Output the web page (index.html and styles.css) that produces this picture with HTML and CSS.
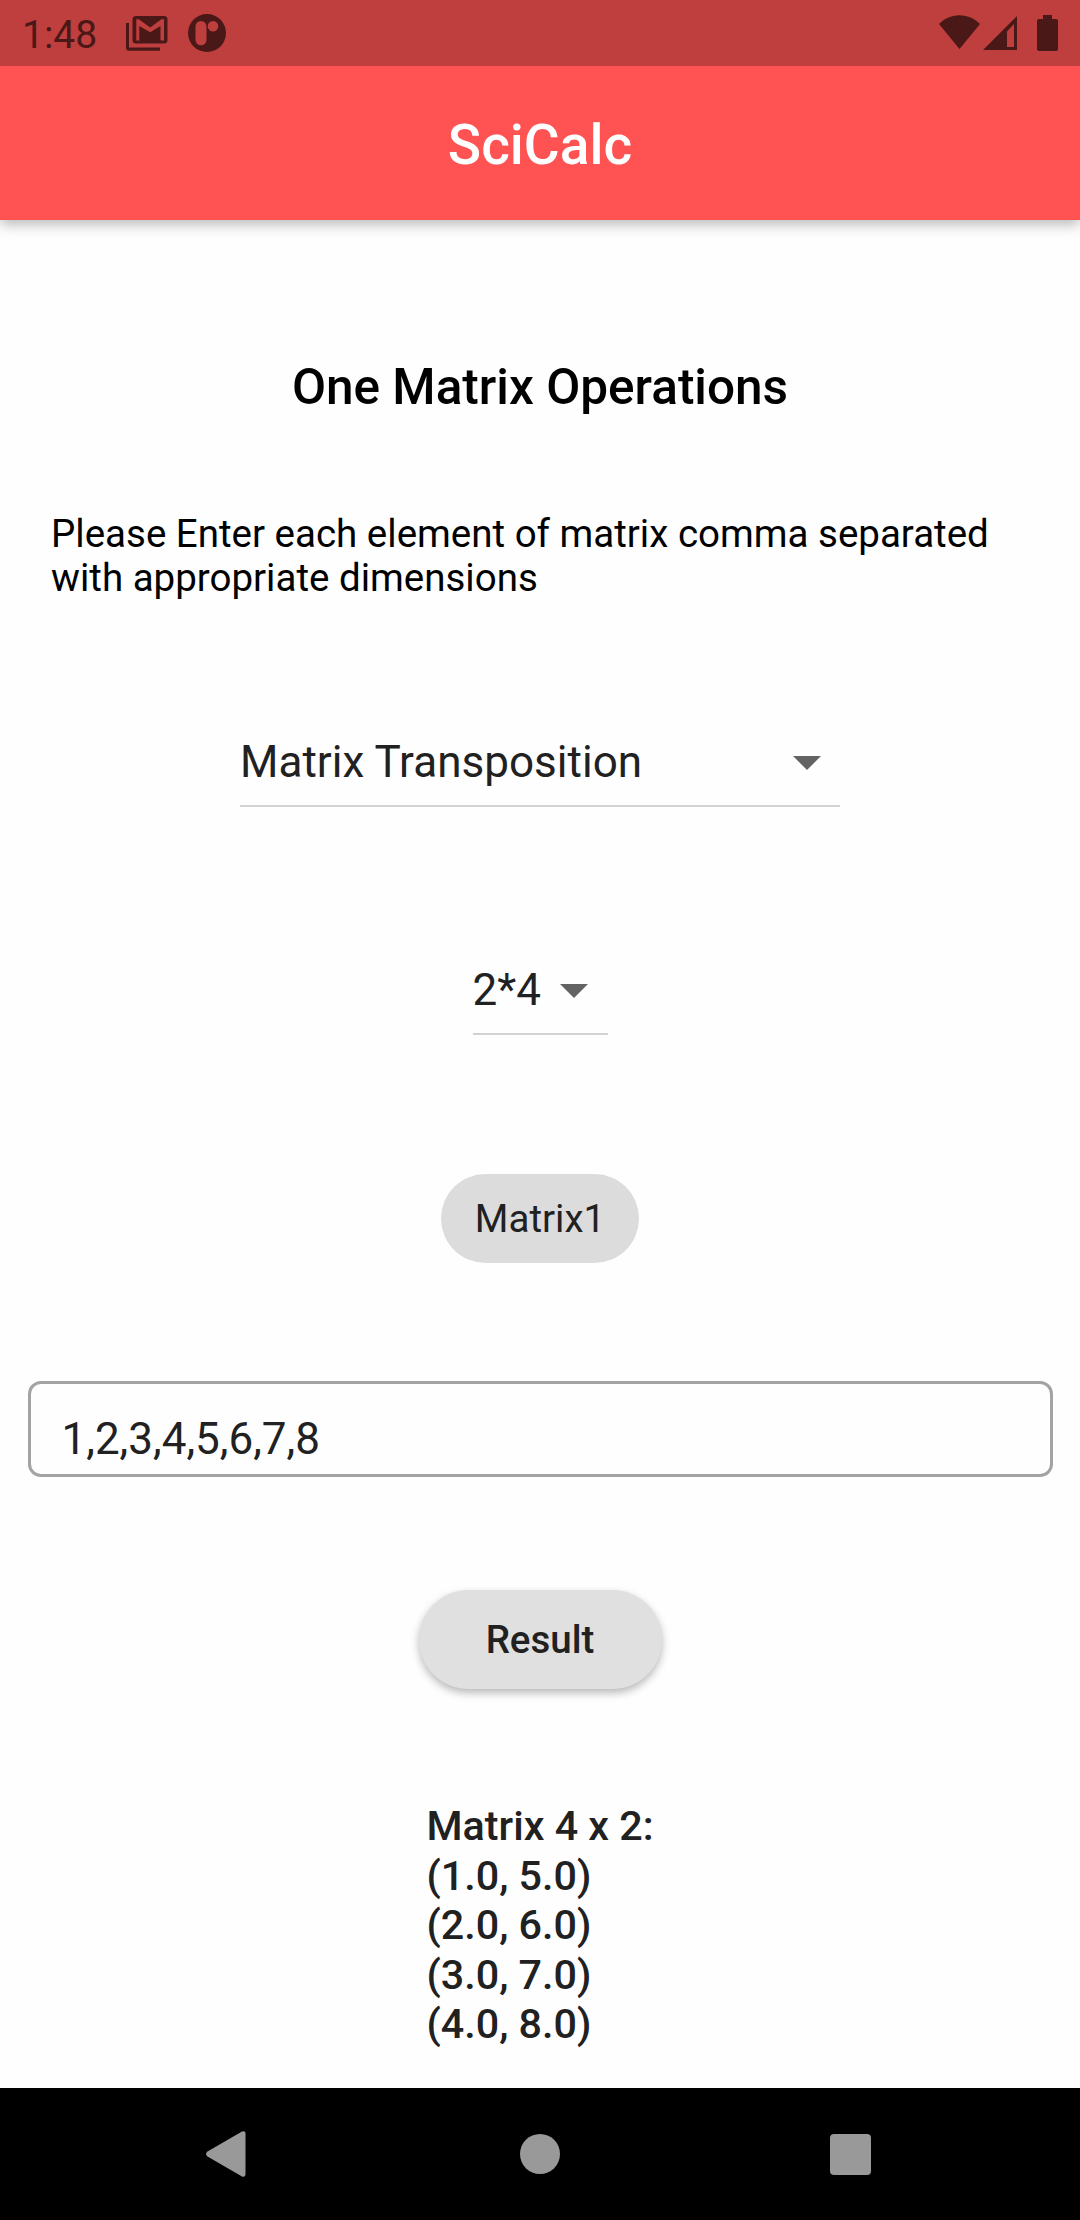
FILE: index.html
```html
<!DOCTYPE html>
<html lang="en">
<head>
<meta charset="utf-8">
<title>SciCalc</title>
<link rel="stylesheet" href="styles.css">
</head>
<body>
<div class="screen">
  <div class="status-bar">
    <span class="clock">1:48</span>
    <svg class="icon-mail" width="42" height="36" viewBox="0 0 42 36">
      <path fill-rule="evenodd" d="M10 0h28a3.500 3.500 0 0 1 3.500 3.500V24a3.500 3.500 0 0 1-3.500 3.500H10a3.500 3.500 0 0 1-3.500-3.500V3.500A3.500 3.500 0 0 1 10 0zM10.300 24.500h3V10l10.900 6.300L34.500 10v14.500h3.500V3.300h-2.600L24.200 11.500 12.800 3.300h-2.500z"/>
      <path d="M0 7h3v24.500h31v3.200H3a3 3 0 0 1-3-3z"/>
    </svg>
    <svg class="icon-round" width="38" height="38" viewBox="0 0 38 38">
      <path fill-rule="evenodd" d="M19 0a19 19 0 1 1 0 38 19 19 0 0 1 0-38zM13 7a5.500 5.500 0 0 0-5.500 5.500v13.300a5.500 5.500 0 0 0 11 0V12.500A5.500 5.500 0 0 0 13 7zM25 7a5.300 5.300 0 1 0 0 10.600A5.300 5.300 0 0 0 25 7z"/>
    </svg>
    <span class="spacer"></span>
    <svg class="icon-wifi" width="41" height="34" viewBox="0 0 41 34">
      <path d="M20.500 34L0 9C5 4 12 .2 20.500 .2S36 4 41 9z"/>
    </svg>
    <svg class="icon-signal" width="34" height="34" viewBox="0 0 34 34">
      <path fill-rule="evenodd" d="M34 0v34H0zM31 8l-7 7.500v15.500h7z"/>
    </svg>
    <svg class="icon-battery" width="21" height="36" viewBox="0 0 21 36">
      <path d="M6 0h9v4h4a2 2 0 0 1 2 2v28a2 2 0 0 1-2 2H2a2 2 0 0 1-2-2V6a2 2 0 0 1 2-2h4z"/>
    </svg>
  </div>
  <header class="app-bar">SciCalc</header>
  <main class="content">
    <h1 class="heading">One Matrix Operations</h1>
    <p class="hint">Please Enter each element of matrix comma separated with appropriate dimensions</p>
    <div class="dropdown dropdown-operation">
      <span>Matrix Transposition</span>
      <svg class="arrow" width="28" height="14" viewBox="0 0 28 14"><path d="M0 0h28L14 14z"/></svg>
    </div>
    <div class="dropdown dropdown-size">
      <span>2*4</span>
      <svg class="arrow" width="28" height="14" viewBox="0 0 28 14"><path d="M0 0h28L14 14z"/></svg>
    </div>
    <div class="chip">Matrix1</div>
    <div class="field">1,2,3,4,5,6,7,8</div>
    <button class="result-button">Result</button>
    <div class="output">Matrix 4 x 2:<br>(1.0, 5.0)<br>(2.0, 6.0)<br>(3.0, 7.0)<br>(4.0, 8.0)</div>
  </main>
  <nav class="nav-bar">
    <svg width="40" height="46" viewBox="0 0 40 46"><path d="M36 .6Q39.500-1 39.500 3v40q0 4-3.500 2.400L1.500 25.500q-3-2.500 0-5z"/></svg>
    <svg class="nav-home" width="40" height="40" viewBox="0 0 40 40"><circle cx="20" cy="20" r="20"/></svg>
    <svg width="41" height="41" viewBox="0 0 41 41"><rect width="41" height="41" rx="4"/></svg>
  </nav>
</div>
</body>
</html>
```
FILE: styles.css
```css
* { box-sizing: border-box; }

body {
  margin: 0;
  font-family: Roboto, sans-serif;
  color: #212121;
}

.screen {
  width: 1080px;
  height: 2220px;
  display: flex;
  flex-direction: column;
  background: #fefefe;
}

.status-bar {
  position: relative;
  z-index: 1;
  height: 66px;
  display: flex;
  align-items: flex-start;
  padding: 0 22px 0 22px;
  background: #bf3e3e;
  color: #4b1818;
  fill: #4b1818;
}

.clock {
  width: 104px;
  font-size: 39px;
  line-height: 70px;
}

.icon-mail { margin-top: 16px; }
.icon-round { margin: 14px 0 0 20px; }
.spacer { flex: 1; }
.icon-wifi { margin-top: 15px; }
.icon-signal { margin: 16px 0 0 3px; }
.icon-battery { margin: 15px 0 0 20px; }

.app-bar {
  position: relative;
  height: 154px;
  padding-top: 2px;
  background: #ff5252;
  box-shadow: 0 5px 12px rgba(0, 0, 0, 0.26);
  color: #fff;
  font-size: 55px;
  font-weight: 500;
  line-height: 154px;
  text-align: center;
}

.content {
  flex: 1;
  display: flex;
  flex-direction: column;
  align-items: center;
}

.heading {
  margin: 138px 0 0;
  color: #000;
  font-size: 49.5px;
  font-weight: 500;
  line-height: 58px;
}

.hint {
  width: 978px;
  margin: 96px 0 0;
  color: #000;
  font-size: 38.5px;
  line-height: 44px;
}

.dropdown {
  display: flex;
  justify-content: space-between;
  height: 71px;
  border-bottom: 2px solid #d2d2d2;
  font-size: 44px;
  letter-spacing: 0.03px;
  line-height: 52px;
}

.dropdown-operation {
  width: 600px;
  margin-top: 136px;
  padding-right: 19px;
}

.dropdown-size {
  width: 135px;
  margin-top: 157px;
  padding-right: 20px;
}

.arrow {
  margin-top: 20px;
  fill: #636363;
}

.chip {
  width: 198px;
  height: 89px;
  margin-top: 139px;
  border-radius: 45px;
  background: #dcdcdc;
  font-size: 38.5px;
  line-height: 89px;
  text-align: center;
}

.field {
  width: 1025px;
  height: 96px;
  margin-top: 118px;
  padding-left: 31px;
  border: 3px solid #a3a3a3;
  border-radius: 13px;
  font-size: 44px;
  line-height: 111px;
}

.result-button {
  width: 243px;
  height: 99px;
  margin-top: 113px;
  padding: 0;
  border: 0;
  border-radius: 50px;
  background: #e0e0e0;
  box-shadow: 0 4px 8px rgba(0, 0, 0, 0.28);
  color: #212121;
  font: 500 38.5px/99px Roboto, sans-serif;
}

.output {
  width: 227px;
  margin-top: 113px;
  font-size: 41.25px;
  font-weight: 500;
  line-height: 49.5px;
  white-space: nowrap;
}

.nav-bar {
  height: 132px;
  display: grid;
  grid-template-columns: 40px 40px 41px;
  column-gap: 274px 271px;
  column-gap: 272px;
  align-items: center;
  padding-left: 206px;
  background: #000;
  fill: #999;
}

.nav-home { margin-left: 2px; }
```
